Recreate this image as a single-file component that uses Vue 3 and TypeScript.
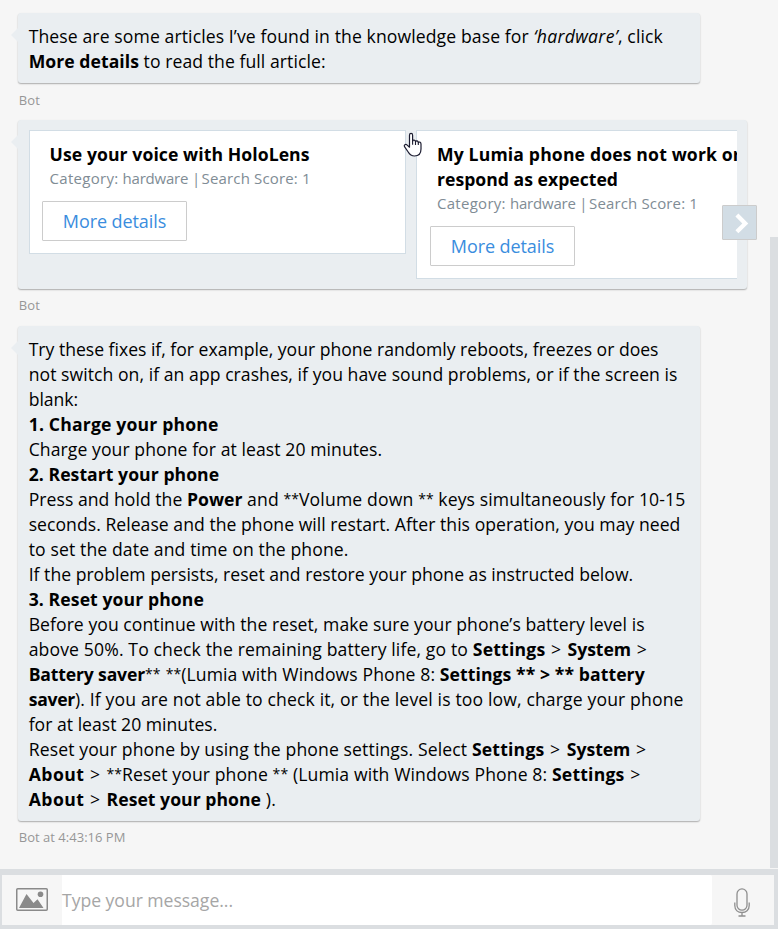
<script setup lang="ts">
import type { Directive } from 'vue'

interface Run { text: string; end: number; kind?: 'bold' | 'italic' | 'star' }
type Line = Run[]

// Spreads tracking over a run so that it occupies the given width.
const vFit: Directive<HTMLElement, number> = {
  mounted(el, { value }) {
    const count = (el.textContent ?? '').length
    const natural = el.getBoundingClientRect().width
    if (count && natural) el.style.letterSpacing = `${(value - natural) / count}px`
  },
}

const origin = 28.7
const widthOf = (line: Line, i: number) => line[i].end - (i ? line[i - 1].end : origin)

const intro: Line[] = [
  [
    { text: 'These are some articles I’ve found in the knowledge base for ', end: 533.5 },
    { text: '‘hardware’', end: 618, kind: 'italic' },
    { text: ', click', end: 663 },
  ],
  [
    { text: 'More details', end: 139, kind: 'bold' },
    { text: ' to read the full article:', end: 325.6 },
  ],
]

const article: Line[] = [
  [{ text: 'Try these fixes if, for example, your phone randomly reboots, freezes or does', end: 658.5 }],
  [{ text: 'not switch on, if an app crashes, if you have sound problems, or if the screen is', end: 677.5 }],
  [{ text: 'blank:', end: 78.2 }],
  [{ text: '1. Charge your phone', end: 218.6, kind: 'bold' }],
  [{ text: 'Charge your phone for at least 20 minutes.', end: 382.2 }],
  [{ text: '2. Restart your phone', end: 219.2, kind: 'bold' }],
  [
    { text: 'Press and hold the ', end: 187 },
    { text: 'Power', end: 242.4, kind: 'bold' },
    { text: ' and ', end: 283.6 },
    { text: '**', end: 299, kind: 'star' },
    { text: 'Volume down ', end: 418.2 },
    { text: '**', end: 433.6, kind: 'star' },
    { text: ' keys simultaneously for 10-15', end: 685.4 },
  ],
  [{ text: 'seconds. Release and the phone will restart. After this operation, you may need', end: 680.4 }],
  [{ text: 'to set the date and time on the phone.', end: 348.6 }],
  [{ text: 'If the problem persists, reset and restore your phone as instructed below.', end: 633.2 }],
  [{ text: '3. Reset your phone', end: 204, kind: 'bold' }],
  [{ text: 'Before you continue with the reset, make sure your phone’s battery level is', end: 644.6 }],
  [
    { text: 'above 50%. To check the remaining battery life, go to ', end: 472.8 },
    { text: 'Settings', end: 545.4, kind: 'bold' },
    { text: ' > ', end: 567.6 },
    { text: 'System', end: 631, kind: 'bold' },
    { text: ' >', end: 648 },
  ],
  [
    { text: 'Battery saver', end: 145, kind: 'bold' },
    { text: '**', end: 160.6, kind: 'star' },
    { text: ' ', end: 165.7 },
    { text: '**', end: 181.2, kind: 'star' },
    { text: '(Lumia with Windows Phone 8: ', end: 439.8 },
    { text: 'Settings ** > ** battery', end: 644.8, kind: 'bold' },
  ],
  [
    { text: 'saver', end: 75, kind: 'bold' },
    { text: '). If you are not able to check it, or the level is too low, charge your phone', end: 683.6 },
  ],
  [{ text: 'for at least 20 minutes.', end: 217.4 }],
  [
    { text: 'Reset your phone by using the phone settings. Select ', end: 471.9 },
    { text: 'Settings', end: 544.5, kind: 'bold' },
    { text: ' > ', end: 566.8 },
    { text: 'System', end: 630.4, kind: 'bold' },
    { text: ' >', end: 647.3 },
  ],
  [
    { text: 'About', end: 84.4, kind: 'bold' },
    { text: ' > ', end: 106.6 },
    { text: '**', end: 122, kind: 'star' },
    { text: 'Reset your phone ', end: 272.6 },
    { text: '**', end: 288.2, kind: 'star' },
    { text: ' (Lumia with Windows Phone 8: ', end: 551.9 },
    { text: 'Settings', end: 624.5, kind: 'bold' },
    { text: ' >', end: 641.5 },
  ],
  [
    { text: 'About', end: 84.4, kind: 'bold' },
    { text: ' > ', end: 106.6 },
    { text: 'Reset your phone', end: 261, kind: 'bold' },
    { text: ' ).', end: 276 },
  ],
]

const meta = [
  { text: 'Category: ', width: 73 },
  { text: 'hardware ', width: 69.3 },
  { text: '|', width: 6.7 },
  { text: ' ', width: 3 },
  { text: 'Search Score: 1', width: 109 },
]

const cards = [
  { title: [{ text: 'Use your voice with HoloLens', width: 260 }] },
  {
    title: [
      { text: 'My Lumia phone does not work or', width: 304 },
      { text: 'respond as expected', width: 181 },
    ],
  },
]
</script>

<template>
  <div class="chat">
    <main class="history">
      <section class="bubble">
        <p v-for="(line, n) in intro" :key="n" class="line">
          <span v-for="(run, i) in line" :key="i" v-fit="widthOf(line, i)" :class="run.kind">{{ run.text }}</span>
        </p>
      </section>
      <div class="from first"><span v-fit="21.2">Bot</span></div>

      <section class="bubble carousel">
        <div class="cards">
          <article v-for="(card, n) in cards" :key="n" class="card">
            <h2 v-for="row in card.title" :key="row.text" class="line"><span v-fit="row.width">{{ row.text }}</span></h2>
            <p class="meta"><span v-for="part in meta" :key="part.text" v-fit="part.width">{{ part.text }}</span></p>
            <button class="details"><span v-fit="103.4">More details</span></button>
          </article>
        </div>
        <button class="next" aria-label="Next">
          <svg width="33" height="33" viewBox="0 0 33 33"><path d="M13.9 9 L22.3 17.4 L13.9 25.8" fill="none" stroke="#fff" stroke-width="4.2" /></svg>
        </button>
        <svg class="pointer" width="20" height="26" viewBox="0 0 20 26">
          <path d="M6.5 15.2 V3.2 C6.5 .8 9.6 .8 9.6 3.2 V9.2 C9.8 7.5 12.5 7.7 12.5 9.7 C13 8.3 15.3 8.5 15.3 10.7 C16 9.5 18 9.9 18 12 V17 C18 21 15.8 24 11.5 24 C8.2 24 6.7 22.6 5.2 20 L1.5 14.7 C.6 13.1 2.6 11.7 3.9 12.9 L6.5 15.2Z" fill="#fff" stroke="#1c1c30" stroke-width="1.2" stroke-linejoin="round" />
          <path d="M9.6 8.5V12.7M12.5 9.7V12.9M15.3 10.7V13.1" fill="none" stroke="#1c1c30" stroke-width="1.1" />
        </svg>
      </section>
      <div class="from"><span v-fit="21.2">Bot</span></div>

      <section class="bubble">
        <p v-for="(line, n) in article" :key="n" class="line">
          <span v-for="(run, i) in line" :key="i" v-fit="widthOf(line, i)" :class="run.kind">{{ run.text }}</span>
        </p>
      </section>
      <div class="from"><span v-fit="106.6">Bot at 4:43:16 PM</span></div>
      <div class="scrollbar"></div>
    </main>

    <footer class="console">
      <div class="upload">
        <svg width="32" height="24" viewBox="0 0 32 24">
          <rect x=".75" y=".75" width="30.5" height="21.5" rx="1" fill="none" stroke="#8a8a8a" stroke-width="1.5" />
          <path d="M3 20 L10.5 6 L17.5 15 L21.5 11.3 L27.5 20Z" fill="#8a8a8a" />
          <circle cx="24.5" cy="6.3" r="2.8" fill="#8a8a8a" />
        </svg>
      </div>
      <div class="entry"><span v-fit="171">Type your message...</span></div>
      <div class="mic">
        <svg width="16" height="29" viewBox="0 0 16 29">
          <g fill="none" stroke="#8f8f8f" stroke-width="1.3">
            <rect x="3" y=".9" width="10" height="21.3" rx="5" />
            <path d="M.8 14.5V17.5C.8 22 4 24.5 8 24.5S15.2 22 15.2 17.5V14.5M8 24.5V28M4.5 28H11.5" />
          </g>
        </svg>
      </div>
    </footer>
  </div>
</template>

<style>
body { background: #f6f6f6; overflow: hidden; }
</style>

<style scoped>
.chat {
  display: flex;
  flex-direction: column;
  height: 929px;
  box-sizing: border-box;
  background: #f6f6f6;
  font-family: "Open Sans", "Noto Sans", sans-serif;
  font-size: 17.6px;
  color: #000;
}
.history {
  position: relative;
  flex: 1;
  display: flex;
  flex-direction: column;
  align-items: flex-start;
  padding: 13px 0 0 18px;
}
.bubble {
  position: relative;
  width: 682px;
  box-sizing: border-box;
  padding: 11px 10px 9px 10.7px;
  background: #eaeef1;
  border-radius: 3px;
  box-shadow: 0 1px 1.5px rgba(0, 0, 0, .3);
}
.bubble::before {
  content: "";
  position: absolute;
  left: -7px;
  top: 15px;
  border: solid transparent;
  border-width: 7px 7px 7px 0;
  border-right-color: #eaeef1;
}
.line {
  margin: 0;
  height: 25px;
  line-height: 25px;
  font-size: inherit;
  white-space: pre;
}
.bold { font-weight: 700; }
.italic { font-style: italic; }
.star {
  position: relative;
  top: -2px;
  font-size: 14px;
  line-height: 1;
}
.from {
  height: 21px;
  padding: 6px 0 0 .8px;
  margin-bottom: 10px;
  line-height: 20px;
  font-size: 13px;
  color: #969696;
  white-space: pre;
}
.from.first {
  height: 20px;
  padding-top: 7px;
}
.carousel {
  width: 729px;
  height: 169px;
  padding: 10px;
}
.cards {
  display: flex;
  align-items: flex-start;
  gap: 10px;
  width: 708px;
  margin-left: 1px;
  overflow: hidden;
}
.card {
  flex: 0 0 377px;
  box-sizing: border-box;
  border: 1px solid #d2dde5;
  background: #fff;
  padding: 11px 12px 12px 19.6px;
}
.card + .card { padding-left: 20px; }
.card h2 { font-weight: 700; }
.meta {
  margin: 0;
  height: 24px;
  line-height: 23px;
  font-size: 15px;
  color: #808c95;
  white-space: pre;
}
.details {
  display: flex;
  align-items: center;
  justify-content: center;
  width: 145px;
  height: 40px;
  margin: 10px 0 0 -7.6px;
  padding: 0;
  border: 1px solid #ccc;
  border-radius: 1px;
  background: #fff;
  color: #3a8dde;
  font: 18px "Open Sans", "Noto Sans", sans-serif;
  white-space: pre;
}
.card + .card .details { margin-left: -7px; }
.next {
  position: absolute;
  left: 704px;
  top: 85px;
  width: 35px;
  height: 35px;
  padding: 0;
  border: 1px solid #ccc;
  border-radius: 1px;
  background: #d2dde5;
}
.next svg { display: block; }
.pointer {
  position: absolute;
  left: 385px;
  top: 12px;
}
.scrollbar {
  position: absolute;
  right: 0;
  top: 237px;
  width: 8px;
  height: 631px;
  background: #dbdee1;
}
.console {
  display: flex;
  height: 60px;
  box-sizing: border-box;
  border: solid #dbdee1;
  border-width: 6px 4px 4px 2px;
  background: #f6f6f6;
}
.upload {
  width: 60px;
  display: flex;
  padding: 13px 0 0 14px;
  box-sizing: border-box;
}
.entry {
  width: 650px;
  background: #fff;
  border-radius: 0 2px 2px 0;
  line-height: 51px;
  font-size: 17.6px;
  color: #a6a6a6;
  white-space: pre;
}
.mic {
  flex: 1;
  padding: 13px 0 0 22.3px;
}
</style>
